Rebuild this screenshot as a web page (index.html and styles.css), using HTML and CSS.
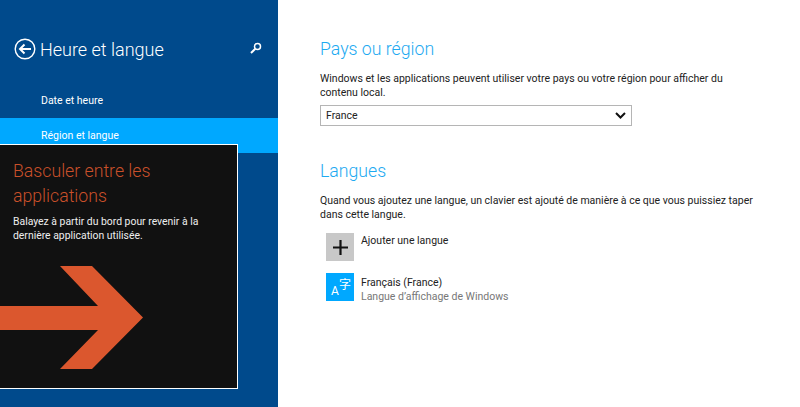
FILE: index.html
```html
<!DOCTYPE html>
<html lang="fr">
<head>
    <meta charset="UTF-8">
    <title>Heure et langue</title>
    <link rel="stylesheet" href="styles.css">
</head>
<body>
    <div class="sidebar">
        <div class="side-head">
            <svg class="back" width="22" height="22" viewBox="0 0 22 22">
                <circle cx="11" cy="11" r="9.800" fill="none" stroke="#fff" stroke-width="1.400"/>
                <path d="M17 11H6M10.500 6.500L6 11l4.500 4.500" fill="none" stroke="#fff" stroke-width="2"/>
            </svg>
            <span class="side-title">Heure et langue</span>
            <svg class="search" width="12" height="12" viewBox="0 0 12 12">
                <circle cx="7.500" cy="4.500" r="3" fill="none" stroke="#fff" stroke-width="1.500"/>
                <path d="M5.300 6.700L1 11" stroke="#fff" stroke-width="2"/>
            </svg>
        </div>
        <div class="nav-item">Date et heure</div>
        <div class="nav-item selected">Région et langue</div>

        <div class="tip">
            <div class="tip-title">Basculer entre les applications</div>
            <p class="tip-text">Balayez à partir du bord pour revenir à la dernière application utilisée.</p>
            <svg class="tip-arrow" width="143" height="103" viewBox="0 0 143 103">
                <path d="M60 0H92L143 51.500 92 103H60L98 64H0V40H98Z" fill="#db572e"/>
            </svg>
        </div>
    </div>

    <div class="main">
        <h2>Pays ou région</h2>
        <p class="desc">Windows et les applications peuvent utiliser votre pays ou votre région pour afficher du contenu local.</p>
        <div class="select">
            <span>France</span>
            <svg width="11" height="7" viewBox="0 0 11 7">
                <path d="M1 1l4.500 4.500L10 1" fill="none" stroke="#111" stroke-width="2"/>
            </svg>
        </div>

        <h2 class="langs">Langues</h2>
        <p class="desc">Quand vous ajoutez une langue, un clavier est ajouté de manière à ce que vous puissiez taper dans cette langue.</p>
        <div class="lang-row add">
            <div class="tile grey">
                <svg width="15" height="15" viewBox="0 0 15 15">
                    <path d="M7.500 0v15M0 7.500h15" stroke="#111" stroke-width="2.200"/>
                </svg>
            </div>
            <div class="lang-name">Ajouter une langue</div>
        </div>
        <div class="lang-row">
            <div class="tile blue">
                <span class="tile-a">A</span><span class="tile-k">字</span>
            </div>
            <div class="lang-text">
                <div class="lang-name">Français (France)</div>
                <div class="lang-sub">Langue d’affichage de Windows</div>
            </div>
        </div>
    </div>
</body>
</html>
```

FILE: styles.css
```css
html, body {
    margin: 0;
    height: 100%;
}
body {
    display: flex;
    height: 407px;
    overflow: hidden;
    font-family: Roboto, "Open Sans", sans-serif;
    background-color: #fff;
}

.sidebar {
    position: relative;
    width: 278px;
    flex-shrink: 0;
    background-color: #004a8c;
    color: #fff;
}
.side-head {
    display: flex;
    align-items: center;
    height: 22px;
    padding: 38px 16px 0 14px;
}
.side-title {
    margin-left: 4px;
    font-size: 18px;
    font-weight: 300;
    flex: 1;
}
.search {
    margin-top: -2px;
}
.nav-item {
    height: 35px;
    line-height: 35px;
    padding-left: 41px;
    font-size: 10.500px;
}
.side-head + .nav-item {
    margin-top: 23px;
}
.selected {
    background-color: #00a8ff;
}

/* tutorial panel over the nav */
.tip {
    position: absolute;
    left: 0;
    top: 144px;
    width: 238px;
    height: 245px;
    box-sizing: border-box;
    padding: 14px 13px;
    background-color: #111;
    border: 1px solid #fff;
    border-left: none;
}
.tip-title {
    font-size: 17.700px;
    font-weight: 300;
    line-height: 25px;
    color: #c9502a;
}
.tip-text {
    margin: 6px 0 0;
    font-size: 10.400px;
    line-height: 14px;
    color: #eee;
}
.tip-arrow {
    position: absolute;
    left: 0;
    top: 121px;
}

.main {
    flex: 1;
    padding: 37px 40px 0 42px;
    color: #222;
}
h2 {
    margin: 0;
    font-size: 17.700px;
    font-weight: 300;
    line-height: 24px;
    color: #1eaaf1;
}
.desc {
    margin: 11px 0 0;
    font-size: 10.500px;
    line-height: 14px;
    width: 438px;
}
.select {
    display: flex;
    align-items: center;
    justify-content: space-between;
    box-sizing: border-box;
    width: 312px;
    height: 21px;
    margin-top: 5px;
    padding: 0 5px;
    border: 1px solid #b5b5b5;
    font-size: 10.500px;
}
.langs {
    margin-top: 33px;
}
.lang-row {
    display: flex;
    margin-top: 12px;
    margin-left: 6px;
}
.lang-row.add {
    margin-top: 11px;
}
.tile {
    display: flex;
    align-items: center;
    justify-content: center;
    position: relative;
    width: 28px;
    height: 28px;
    margin-right: 7px;
    flex-shrink: 0;
}
.grey {
    background-color: #c8c8c8;
}
.blue {
    background-color: #00a8ff;
    color: #fff;
}
.tile-a {
    position: absolute;
    left: 5px;
    bottom: 3px;
    font-size: 12px;
}
.tile-k {
    position: absolute;
    right: 3px;
    top: 2px;
    font-size: 12px;
    font-family: "Noto Sans CJK SC", sans-serif;
}
.lang-text {
    padding-top: 2px;
}
.lang-name {
    font-size: 10.500px;
    line-height: 14px;
    padding-top: 1px;
}
.lang-sub {
    font-size: 10.500px;
    line-height: 14px;
    color: #777;
}
```
